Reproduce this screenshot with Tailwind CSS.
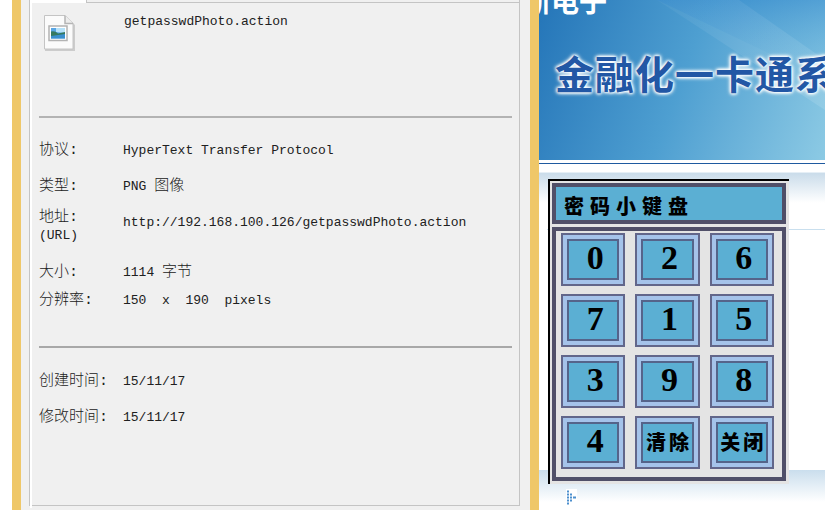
<!DOCTYPE html>
<html lang="zh-CN">
<head>
<meta charset="utf-8">
<title>getpasswdPhoto.action</title>
<script src="https://cdn.jsdelivr.net/npm/@tailwindcss/browser@4"></script>
</head>
<body class="flex h-screen overflow-hidden bg-white">
  <!-- Properties window -->
  <section aria-label="属性" class="ml-3 flex w-[527px] shrink-0 border-x-9 border-[#efc768] bg-[#f0f0f0] pr-[10px] pb-1 pl-2 font-['Liberation_Mono','Noto_Sans_CJK_SC',monospace] text-[13px] leading-[18px] text-[#202020]">
    <div class="relative flex-1 border-x border-b border-[#c4c4c4]">
      <div class="flex h-[3px]">
        <div class="w-14 bg-white"></div>
        <div class="flex-1 border-b border-l border-[#c4c4c4]"></div>
      </div>
      <div class="flex h-full flex-col border-l-2 border-white pr-[7px] pl-[7px]">
        <header class="flex h-[113px] items-start pt-[10px]">
          <div class="w-[85px] pt-px pl-1">
            <svg width="34" height="38" viewBox="0 0 34 38" aria-hidden="true">
              <path d="M2 2h21l9 9v26H2z" fill="#000" opacity=".15"/>
              <path d="M1.5 1.5h20.5l8 8v25.500H1.500z" fill="#fbfbfb" stroke="#c4c4c4"/>
              <path d="M22 1.500v8h8" fill="#ededed" stroke="#b5b5b5" stroke-width="1.500"/>
              <rect x="6" y="12" width="18" height="14.500" fill="#fff" stroke="#b3b3b3" stroke-width="1.500"/>
              <rect x="8" y="14" width="14" height="10.500" fill="#5aa6e4"/>
              <path d="M13 14h9v5l-9-1z" fill="#b6e2fa"/>
              <path d="M8 17.500q4-1 7 2l7-1.500v4H8z" fill="#35795f"/>
              <path d="M8 22l14-2v4.500H8z" fill="#3a8fce"/>
            </svg>
          </div>
          <h1>getpasswdPhoto.action</h1>
        </header>
        <hr class="h-0.5 border-0 bg-[#b3b3b3]">
        <table class="mt-[15px] w-full border-collapse text-left">
          <tbody>
            <tr class="h-9"><th scope="row" class="w-[84px] text-[15px] font-light whitespace-nowrap">协议:</th><td>HyperText Transfer Protocol</td></tr>
            <tr class="h-9"><th scope="row" class="text-[15px] font-light">类型:</th><td>PNG <span class="text-[15px] font-light">图像</span></td></tr>
            <tr class="h-11"><th scope="row" class="text-[15px] font-light">地址:<br><span class="text-[13px] font-normal">(URL)</span></th><td class="pb-2">http://192.168.100.126/getpasswdPhoto.action</td></tr>
            <tr class="h-10"><th scope="row" class="pt-2 text-[15px] font-light">大小:</th><td class="pt-2">1114 <span class="text-[15px] font-light">字节</span></td></tr>
            <tr class="h-6"><th scope="row" class="text-[15px] font-light">分辨率:</th><td class="whitespace-pre">150  x  190  pixels</td></tr>
          </tbody>
        </table>
        <hr class="mt-[33px] h-0.5 border-0 bg-[#a8a8a8]">
        <table class="mt-4 w-full border-collapse text-left">
          <tbody>
            <tr class="h-9"><th scope="row" class="w-[84px] text-[15px] font-light whitespace-nowrap">创建时间:</th><td>15/11/17</td></tr>
            <tr class="h-9"><th scope="row" class="text-[15px] font-light">修改时间:</th><td>15/11/17</td></tr>
          </tbody>
        </table>
      </div>
    </div>
  </section>

  <!-- Web page behind the window -->
  <main class="flex min-w-0 flex-1 flex-col overflow-hidden font-['Noto_Sans_CJK_SC',sans-serif]">
    <header class="relative h-40 shrink-0 overflow-hidden bg-linear-110 from-[#2475b8] via-[#4e9fd1] to-[#8ccae4] whitespace-nowrap">
      <svg class="absolute inset-0 h-full w-full" viewBox="0 0 286 160" preserveAspectRatio="none" aria-hidden="true">
        <defs>
          <linearGradient id="sky" x1="0" y1="0" x2="0" y2="1">
            <stop offset="0" stop-color="#2f86cc" stop-opacity=".5"/>
            <stop offset="1" stop-color="#5fb0da" stop-opacity="0"/>
          </linearGradient>
          <linearGradient id="ray" x1="0" y1="0" x2="1" y2="1">
            <stop offset="0" stop-color="#fff" stop-opacity=".04"/>
            <stop offset="1" stop-color="#fff" stop-opacity=".12"/>
          </linearGradient>
        </defs>
        <path d="M118 0H286V80z" fill="url(#sky)"/>
        <path d="M118 0H200L286 60V110z" fill="url(#ray)"/>
      </svg>
      <div class="relative -mt-[14px] -ml-4 text-[28px] leading-7 font-bold text-white">新电子</div>
      <h2 class="relative mt-9 flex gap-px pl-4 text-[39px] leading-[44px] font-bold text-[#2257a5] [text-shadow:0_0_3px_#fff,0_0_3px_#fff,0_0_4px_#fff,0_0_5px_#fff]"><span>金</span><span>融</span><span>化</span><span>一</span><span>卡</span><span>通</span><span>系</span></h2>
    </header>
    <div class="mt-[3px] h-px shrink-0 bg-[#1f5aa0]"></div>
    <div class="mt-2 h-px shrink-0 bg-[#e6eff6]"></div>
    <div class="relative h-[297px] shrink-0 bg-linear-to-b from-[#cadcea] to-white to-10%">
      <div class="h-14"></div>
      <div class="ml-2 h-px bg-[#c9dfee]"></div>
      <section aria-label="密码小键盘" class="absolute top-1.5 left-[9px] z-10 flex w-[241px] flex-col gap-[3px] border-t-2 border-l-2 border-black bg-[#e4e4e4] pt-0.5 pr-[3px] pb-[3px] pl-0.5 text-black">
        <h3 class="flex h-[41px] items-center gap-1.5 border-4 border-[#504f68] bg-[#5bafd3] pt-1 pl-2 text-xl leading-6 font-black"><span>密</span><span>码</span><span>小</span><span>键</span><span>盘</span></h3>
        <div class="grid grid-cols-3 gap-x-[10px] gap-y-2 border-4 border-[#504f68] pt-[2px] pr-2 pb-2 pl-[5px] font-['Liberation_Serif','Noto_Sans_CJK_SC',serif] text-[34px] leading-8 font-bold">
          <button class="h-[53px] border-2 border-[#62668a] bg-[#a5c3ea] p-1"><span class="flex h-full items-center justify-center border-2 border-[#55648a] bg-[#5bafd3] pb-1 pl-1">0</span></button>
          <button class="h-[53px] border-2 border-[#62668a] bg-[#a5c3ea] p-1"><span class="flex h-full items-center justify-center border-2 border-[#55648a] bg-[#5bafd3] pb-1 pl-1">2</span></button>
          <button class="h-[53px] border-2 border-[#62668a] bg-[#a5c3ea] p-1"><span class="flex h-full items-center justify-center border-2 border-[#55648a] bg-[#5bafd3] pb-1 pl-1">6</span></button>
          <button class="h-[53px] border-2 border-[#62668a] bg-[#a5c3ea] p-1"><span class="flex h-full items-center justify-center border-2 border-[#55648a] bg-[#5bafd3] pb-1 pl-1">7</span></button>
          <button class="h-[53px] border-2 border-[#62668a] bg-[#a5c3ea] p-1"><span class="flex h-full items-center justify-center border-2 border-[#55648a] bg-[#5bafd3] pb-1 pl-1">1</span></button>
          <button class="h-[53px] border-2 border-[#62668a] bg-[#a5c3ea] p-1"><span class="flex h-full items-center justify-center border-2 border-[#55648a] bg-[#5bafd3] pb-1 pl-1">5</span></button>
          <button class="h-[53px] border-2 border-[#62668a] bg-[#a5c3ea] p-1"><span class="flex h-full items-center justify-center border-2 border-[#55648a] bg-[#5bafd3] pb-1 pl-1">3</span></button>
          <button class="h-[53px] border-2 border-[#62668a] bg-[#a5c3ea] p-1"><span class="flex h-full items-center justify-center border-2 border-[#55648a] bg-[#5bafd3] pb-1 pl-1">9</span></button>
          <button class="h-[53px] border-2 border-[#62668a] bg-[#a5c3ea] p-1"><span class="flex h-full items-center justify-center border-2 border-[#55648a] bg-[#5bafd3] pb-1 pl-1">8</span></button>
          <button class="h-[53px] border-2 border-[#62668a] bg-[#a5c3ea] p-1"><span class="flex h-full items-center justify-center border-2 border-[#55648a] bg-[#5bafd3] pb-1 pl-1">4</span></button>
          <button class="h-[53px] border-2 border-[#62668a] bg-[#a5c3ea] p-1"><span class="flex h-full items-center justify-center gap-[3px] border-2 border-[#55648a] bg-[#5bafd3] text-xl font-black"><span>清</span><span>除</span></span></button>
          <button class="h-[53px] border-2 border-[#62668a] bg-[#a5c3ea] p-1"><span class="flex h-full items-center justify-center gap-[3px] border-2 border-[#55648a] bg-[#5bafd3] text-xl font-black"><span>关</span><span>闭</span></span></button>
        </div>
      </section>
    </div>
    <footer class="flex-1 bg-linear-to-b from-[#cadeed] to-white to-80% pt-[19px] pl-[27px]">
      <svg width="11" height="17" viewBox="0 0 11 17" aria-hidden="true">
        <rect width="11" height="17" fill="#fff"/>
        <path d="M1 2h2M1 5h2M4 5h2M1 8h2M4 8h2M7 8h3M1 11h2M4 11h2M1 14h2" transform="translate(0 .5)" stroke="#4c8fce" stroke-width="2"/>
      </svg>
    </footer>
  </main>
</body>
</html>
